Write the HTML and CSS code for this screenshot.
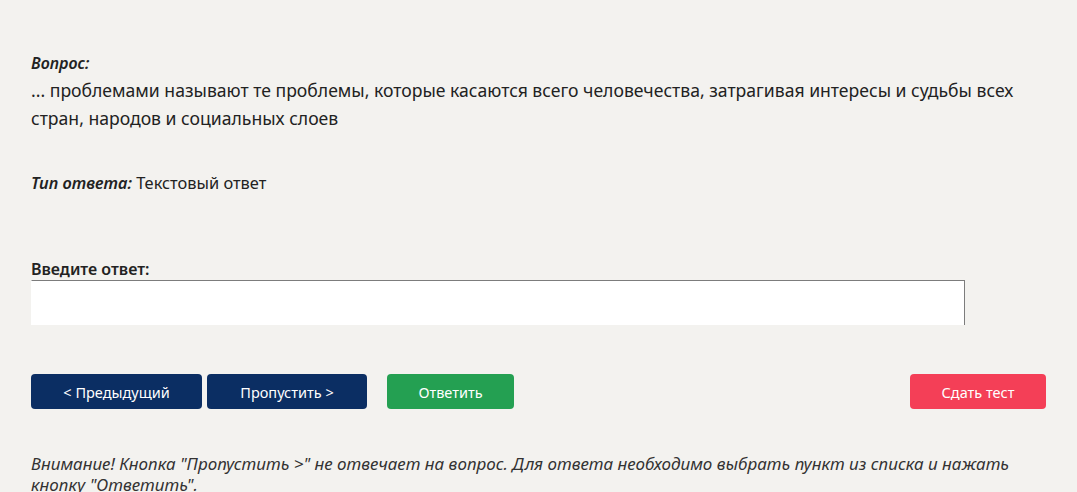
FILE: index.html
```html
<!DOCTYPE html>
<html lang="ru">
<head>
    <meta charset="UTF-8">
    <meta name="viewport" content="width=device-width, initial-scale=1.0">
    <title>Тест</title>
    <link rel="stylesheet" href="styles.css">
</head>
<body>
    <div class="test">
        <div class="question">
            <p class="label">Вопрос:</p>
            <p class="question-text">... проблемами называют те проблемы, которые касаются всего человечества, затрагивая интересы и судьбы всех стран, народов и социальных слоев</p>
        </div>

        <p class="answer-type"><span class="label">Тип ответа:</span> Текстовый ответ</p>

        <div class="answer">
            <label for="answer-text">Введите ответ:</label>
            <div class="answer-box">
                <textarea id="answer-text"></textarea>
            </div>
        </div>

        <div class="buttons">
            <button class="btn btn-prev">&lt; Предыдущий</button>
            <button class="btn btn-skip">Пропустить &gt;</button>
            <button class="btn btn-answer">Ответить</button>
            <button class="btn btn-finish">Сдать тест</button>
        </div>

        <p class="notice">Внимание! Кнопка "Пропустить &gt;" не отвечает на вопрос. Для ответа необходимо выбрать пункт из списка и нажать кнопку "Ответить".</p>
    </div>
</body>
</html>
```

FILE: styles.css
```css
body {
    margin: 0;
    font-family: 'Noto Sans', 'Open Sans', sans-serif;
    background-color: #f3f2ef;
    color: #222;
}

.test {
    padding: 52px 31px 0;
}

p {
    margin: 0;
}

.label {
    font-style: italic;
    font-weight: 600;
}

.question .label {
    font-size: 16px;
    line-height: 22px;
}

.question-text {
    font-size: 17.6px;
    line-height: 28px;
    margin-top: 2px;
}

.answer-type {
    margin-top: 40px;
    font-size: 16.4px;
    line-height: 22px;
}

.answer {
    margin-top: 64px;
}

.answer label {
    display: block;
    font-size: 16px;
    font-weight: 600;
    line-height: 22px;
}

.answer-box {
    width: 934px;
    height: 45px;
    overflow: hidden;
}

.answer-box textarea {
    display: block;
    width: 100%;
    height: 60px;
    box-sizing: border-box;
    border: 1px solid #7c7c7c;
    border-left-color: #fff;
    background: #fff;
    resize: vertical;
}

.buttons {
    display: flex;
    align-items: center;
    margin-top: 49px;
}

.btn {
    height: 35px;
    border: none;
    border-radius: 4px;
    color: #fff;
    font-family: inherit;
    font-size: 14.5px;
    padding: 0;
    cursor: pointer;
}

.btn-prev,
.btn-skip {
    background-color: #0b2e63;
}

.btn-prev {
    width: 171px;
    margin-right: 5px;
}

.btn-skip {
    width: 160px;
}

.btn-answer {
    background-color: #24a052;
    width: 127px;
    margin-left: 20px;
}

.btn-finish {
    background-color: #f43f57;
    width: 136px;
    margin-left: auto;
}

.notice {
    margin-top: 44px;
    font-size: 17px;
    font-style: italic;
    line-height: 21px;
    color: #333;
}
```
